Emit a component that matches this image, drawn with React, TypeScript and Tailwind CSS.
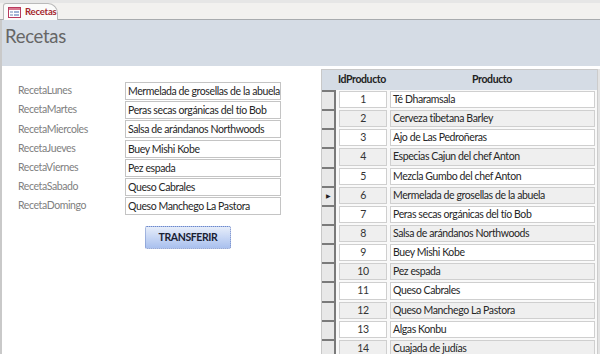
const font = { fontFamily: 'Lato, "Open Sans", sans-serif' }

const campos = [
  ['RecetaLunes', 'Mermelada de grosellas de la abuela'],
  ['RecetaMartes', 'Peras secas orgánicas del tío Bob'],
  ['RecetaMiercoles', 'Salsa de arándanos Northwoods'],
  ['RecetaJueves', 'Buey Mishi Kobe'],
  ['RecetaViernes', 'Pez espada'],
  ['RecetaSabado', 'Queso Cabrales'],
  ['RecetaDomingo', 'Queso Manchego La Pastora'],
]

const productos = [
  'Té Dharamsala',
  'Cerveza tibetana Barley',
  'Ajo de Las Pedroñeras',
  'Especias Cajun del chef Anton',
  'Mezcla Gumbo del chef Anton',
  'Mermelada de grosellas de la abuela',
  'Peras secas orgánicas del tío Bob',
  'Salsa de arándanos Northwoods',
  'Buey Mishi Kobe',
  'Pez espada',
  'Queso Cabrales',
  'Queso Manchego La Pastora',
  'Algas Konbu',
  'Cuajada de judías',
]

function TabIcon() {
  return (
    <svg width="13" height="11" viewBox="0 0 13 11">
      <rect x="0.5" y="0.5" width="12" height="10" fill="#fff" stroke="#b83b5e" />
      <rect x="1" y="1" width="11" height="2" fill="#d9788f" />
      <rect x="2" y="4.5" width="3" height="1" fill="#6b87b8" />
      <rect x="6" y="4" width="5" height="2" fill="#9fb3d6" />
      <rect x="2" y="7.5" width="3" height="1" fill="#6b87b8" />
      <rect x="6" y="7" width="5" height="2" fill="#9fb3d6" />
    </svg>
  )
}

export default function App() {
  return (
    <div className="w-[600px] h-[354px] overflow-hidden bg-white flex flex-col" style={font}>
      <div className="h-[3px] shrink-0 bg-[#e6e6e6]" />
      <div className="h-[17px] shrink-0 bg-[#f2f1ef] border-b border-[#a8abae] flex items-end pl-[3px]">
        <div className="relative h-[17px] w-[55px] bg-[#fbfbfa] border border-b-0 border-[#b9b9b9] rounded-tl-[3px] rounded-tr-[10px] flex items-center gap-[4px] pl-[4px] mb-[-1px]">
          <TabIcon />
          <span className="text-[9.5px] font-bold tracking-[-0.2px] text-[#a4262c]">Recetas</span>
        </div>
      </div>
      <div className="flex-1 min-h-0 flex flex-col border-l-2 border-[#c9c9c9]">
        <div className="h-[46px] shrink-0 bg-[#d5dce5] pl-[3px] pt-[3px]">
          <h1 className="text-[18.5px] leading-[26px] tracking-[-0.3px] text-[#666666]">Recetas</h1>
        </div>
        <div className="flex-1 flex">
          <div className="w-[319px] pt-[16px] text-[10.5px] tracking-[-0.4px]">
            <div className="flex flex-col gap-[1.2px]">
              {campos.map(([label, value]) => (
                <div key={label} className="flex items-center h-[18px]">
                  <span className="w-[123px] shrink-0 pl-[16px] text-[#808080]">{label}</span>
                  <div className="w-[156px] shrink-0 h-[18px] border border-[#c4c4c4] px-[2px] leading-[16px] text-[#262626] whitespace-nowrap overflow-hidden">
                    {value}
                  </div>
                </div>
              ))}
            </div>
            <div className="pl-[143px] pt-[11px]">
              <button className="w-[86px] h-[23px] rounded-[2px] border border-dotted border-[#6f87c6] bg-gradient-to-b from-[#e6edfa] to-[#a9c0ee] text-[10.5px] font-bold text-[#1a2133]">
                TRANSFERIR
              </button>
            </div>
          </div>
          <div className="flex-1 pt-[3px] flex">
            <div className="flex-1 flex flex-col border-l border-t border-[#c8c8c8] bg-[#f9f9f9] text-[10.5px] tracking-[-0.4px]">
              <div className="h-[20px] shrink-0 bg-[#d5dce5] flex items-center font-bold text-[#222]">
                <span className="w-[65px] pl-[16px]">IdProducto</span>
                <span className="flex-1 text-center">Producto</span>
              </div>
              {productos.map((p, i) => {
                const par = i % 2 === 1
                return (
                  <div key={p} className="flex h-[19.15px] shrink-0">
                    <div className="w-[14px] bg-[#e8e8e8] border-r-2 border-t-2 border-[#7a7a7a] flex items-center justify-center">
                      {i === 5 && <span className="text-[6px] text-[#222] leading-none">▶</span>}
                    </div>
                    <div className="flex-1 flex gap-[3px] pl-[3px] pr-[2px] py-[1px]">
                      <div
                        className={`w-[48px] border border-[#cfcfcf] text-center leading-[15px] text-[#333] ${
                          par ? 'bg-[#efefef]' : 'bg-white'
                        }`}
                      >
                        {i + 1}
                      </div>
                      <div
                        className={`flex-1 border border-[#cfcfcf] pl-[2px] leading-[15px] text-[#262626] ${
                          par ? 'bg-[#efefef]' : 'bg-white'
                        }`}
                      >
                        {p}
                      </div>
                    </div>
                  </div>
                )
              })}
            </div>
            <div className="w-[3px] bg-[#e3e3e3] border-l border-[#cccccc]" />
          </div>
        </div>
      </div>
    </div>
  )
}
